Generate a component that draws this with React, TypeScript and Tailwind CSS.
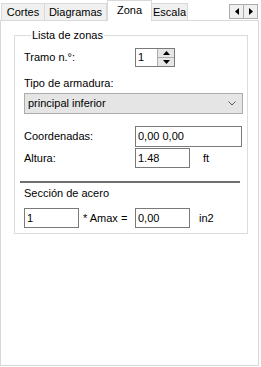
import React from "react";

const font = { fontFamily: '"Liberation Sans", Arial, sans-serif' };

function Tab({ label, w, selected }: { label: string; w: number; selected?: boolean }) {
  if (selected) {
    return (
      <div
        className="relative z-10 -mb-px flex h-[21px] items-start justify-center border border-b-0 border-[#d9d9d9] bg-white pt-[3px] text-[11px] leading-[13px] text-black"
        style={{ width: w }}
      >
        {label}
      </div>
    );
  }
  return (
    <div
      className="-ml-px flex h-[17px] items-center justify-center border border-b-0 border-[#d9d9d9] bg-[#f0f0f0] pt-[1px] text-[11px] leading-[13px] text-black"
      style={{ width: w }}
    >
      {label}
    </div>
  );
}

function Input({ w, value, h = 20 }: { w: number; value: string; h?: number }) {
  return (
    <div
      className="flex items-center border border-[#7a7a7a] bg-white pl-[2px] text-[11px] leading-[13px] text-black"
      style={{ width: w, height: h }}
    >
      {value}
    </div>
  );
}

export default function App() {
  return (
    <div className="h-[367px] w-[261px] overflow-hidden bg-white" style={font}>
      {/* Tab header */}
      <div className="flex h-[20px] items-end pl-[2px]">
        <Tab label="Cortes" w={44} />
        <Tab label="Diagramas" w={63} />
        <Tab label="Zona" w={45} selected />
        <Tab label="Escala" w={37} />
        <div className="ml-auto mr-[3px] flex self-start pt-[4px]">
          <div className="flex h-[15px] w-[15px] items-center justify-center border border-[#adadad] bg-[#f0f0f0]">
            <svg width="4" height="7" viewBox="0 0 4 7">
              <path d="M4 0 L0 3.5 L4 7 Z" fill="#000" />
            </svg>
          </div>
          <div className="-ml-px flex h-[15px] w-[15px] items-center justify-center border border-[#adadad] bg-[#f0f0f0]">
            <svg width="4" height="7" viewBox="0 0 4 7">
              <path d="M0 0 L4 3.5 L0 7 Z" fill="#000" />
            </svg>
          </div>
        </div>
      </div>

      {/* Pane */}
      <div className="h-[346px] w-[259px] border border-[#d9d9d9] bg-white">
        <fieldset className="ml-[13px] mt-[8px] w-[234px] border border-[#dcdcdc] pb-[5px] pl-[9px]">
          <legend className="ml-[7px] px-[1px] text-[11px] leading-[13px] text-black">Lista de zonas</legend>

          {/* Tramo */}
          <div className="mt-[6px] flex h-[19px] items-center">
            <div className="w-[111px] text-[11px] leading-[13px] text-black">Tramo n.°:</div>
            <div className="flex h-[19px] border border-[#7a7a7a] bg-white">
              <div className="flex w-[21px] items-center pl-[2px] text-[11px] leading-[13px] text-black">1</div>
              <div className="flex w-[17px] flex-col border-l border-[#adadad]">
                <div className="flex flex-1 items-center justify-center border-b border-[#adadad] bg-[#e6e6e6]">
                  <svg width="7" height="4" viewBox="0 0 7 4">
                    <path d="M0 4 L3.5 0 L7 4 Z" fill="#000" />
                  </svg>
                </div>
                <div className="flex flex-1 items-center justify-center bg-[#e6e6e6]">
                  <svg width="7" height="4" viewBox="0 0 7 4">
                    <path d="M0 0 L3.5 4 L7 0 Z" fill="#000" />
                  </svg>
                </div>
              </div>
            </div>
          </div>

          {/* Tipo de armadura */}
          <div className="mt-[10px] text-[11px] leading-[13px] text-black">Tipo de armadura:</div>
          <div className="mt-[3px] flex h-[21px] w-[219px] items-center justify-between border border-[#acacac] bg-[#e5e5e5] pl-[3px] pr-[6px] text-[11px] leading-[13px] text-black">
            <span>principal inferior</span>
            <svg width="8" height="5" viewBox="0 0 8 5">
              <path d="M0.5 0.5 L4 4 L7.5 0.5" fill="none" stroke="#5a5a5a" strokeWidth="1" />
            </svg>
          </div>

          {/* Coordenadas */}
          <div className="mt-[12px] flex h-[21px] items-center">
            <div className="w-[111px] text-[11px] leading-[13px] text-black">Coordenadas:</div>
            <Input w={107} h={21} value="0,00 0,00" />
          </div>

          {/* Altura */}
          <div className="mt-[1px] flex h-[20px] items-center">
            <div className="w-[111px] text-[11px] leading-[13px] text-black">Altura:</div>
            <Input w={55} value="1.48" />
            <div className="ml-[13px] text-[11px] leading-[13px] text-black">ft</div>
          </div>

          {/* Separator */}
          <div className="ml-[-4px] mt-[13px] h-[2px] w-[220px] bg-[#707070]" />

          <div className="mt-[4px] text-[11px] leading-[13px] text-black">Sección de acero</div>

          <div className="mt-[8px] flex h-[20px] items-center">
            <Input w={55} value="1" />
            <div className="ml-[4px] w-[52px] text-[11px] leading-[13px] text-black">* Amax =</div>
            <Input w={55} value="0,00" />
            <div className="ml-[9px] text-[11px] leading-[13px] text-black">in2</div>
          </div>
        </fieldset>
      </div>
    </div>
  );
}
